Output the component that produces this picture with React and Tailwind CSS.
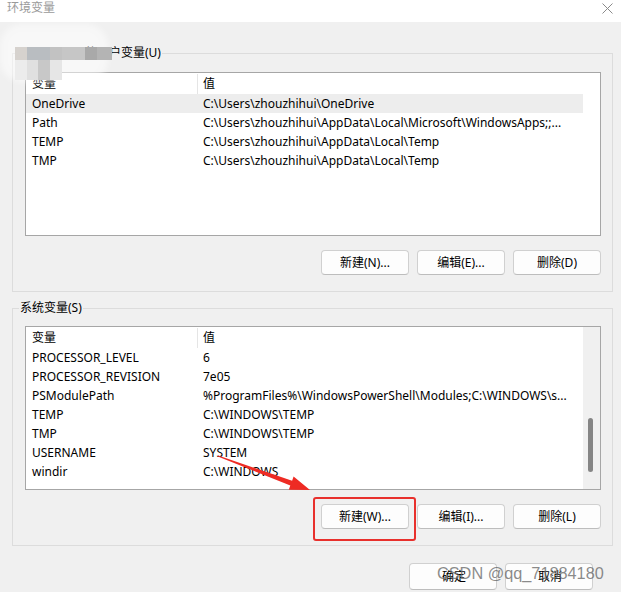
import { useState } from 'react'

const USER_VARS = [
  ['OneDrive', 'C:\\Users\\zhouzhihui\\OneDrive'],
  ['Path', 'C:\\Users\\zhouzhihui\\AppData\\Local\\Microsoft\\WindowsApps;;...'],
  ['TEMP', 'C:\\Users\\zhouzhihui\\AppData\\Local\\Temp'],
  ['TMP', 'C:\\Users\\zhouzhihui\\AppData\\Local\\Temp'],
]

const SYSTEM_VARS = [
  ['PROCESSOR_LEVEL', '6'],
  ['PROCESSOR_REVISION', '7e05'],
  ['PSModulePath', '%ProgramFiles%\\WindowsPowerShell\\Modules;C:\\WINDOWS\\s...'],
  ['TEMP', 'C:\\WINDOWS\\TEMP'],
  ['TMP', 'C:\\WINDOWS\\TEMP'],
  ['USERNAME', 'SYSTEM'],
  ['windir', 'C:\\WINDOWS'],
]

function VarList({ rows, selected, onSelect, scrollbar }) {
  return (
    <div className="h-[164px] border border-[#a6a6a6] bg-white flex overflow-hidden">
      <div className="w-[557px] flex flex-col">
        <div className="h-[21px] flex shrink-0 text-[12px] pt-[1px]">
          <div className="w-[172px] pl-[6px] border-r border-[#e5e5e5] flex items-center">变量</div>
          <div className="pl-[5px] flex items-center">值</div>
        </div>
        {rows.map(([name, value], i) => (
          <div
            key={name + i}
            onClick={() => onSelect(i)}
            className={`h-[19px] shrink-0 flex items-center pt-[1px] text-[12px] whitespace-nowrap ${
              i === selected ? 'bg-[#ededed]' : ''
            }`}
          >
            <div className="w-[172px] pl-[6px]">{name}</div>
            <div className="pl-[5px]">{value}</div>
          </div>
        ))}
      </div>
      {scrollbar ? (
        <div className="w-[17px] bg-[#f0f0f0] pt-[91px] pl-[5px]">
          <div className="w-[5px] h-[54px] rounded-full bg-[#858585]" />
        </div>
      ) : (
        <div className="w-[17px]" />
      )}
    </div>
  )
}

function Btn({ children, className = '' }) {
  return (
    <button
      type="button"
      className={`h-[25px] w-[88px] rounded-[4px] border border-[#d0d0d0] border-b-[#bdbdbd] bg-[#fdfdfd] text-[12px] flex items-center justify-center ${className}`}
    >
      {children}
    </button>
  )
}

function Group({ label, children }) {
  return (
    <fieldset className="w-[601px] ml-[12px] border border-[#dcdcdc] pl-[12px] pr-[11px] pb-[16px]">
      <legend className="ml-[-6px] px-[1px] text-[12px] leading-4">{label}</legend>
      {children}
    </fieldset>
  )
}

export default function App() {
  const [userSel, setUserSel] = useState(0)
  const [sysSel, setSysSel] = useState(-1)

  return (
    <div
      className="relative w-[621px] h-[592px] overflow-hidden bg-[#f0f0f0] text-black"
      style={{ fontFamily: '"Noto Sans", "Noto Sans CJK SC", sans-serif' }}
    >
      {/* title bar */}
      <div className="h-[22px] bg-white flex items-start justify-between pl-[7px] pr-[8px] pt-[1px]">
        <span className="text-[12px] leading-[14px] text-[#9a9a9a]">环境变量</span>
        <svg width="11" height="11" viewBox="0 0 11 11" className="mt-[2px]">
          <path d="M0.5 0.5 L10.5 10.5 M10.5 0.5 L0.5 10.5" stroke="#8a8a8a" strokeWidth="1" fill="none" />
        </svg>
      </div>

      <div className="mt-[23px]">
        <Group label="zhouzhihui 的用户变量(U)">
          <div className="mt-[11px]">
            <VarList rows={USER_VARS} selected={userSel} onSelect={setUserSel} />
          </div>
          <div className="mt-[14px] flex justify-end gap-[8px]">
            <Btn>新建(N)...</Btn>
            <Btn>编辑(E)...</Btn>
            <Btn>删除(D)</Btn>
          </div>
        </Group>
      </div>

      <div className="mt-[8px]">
        <Group label="系统变量(S)">
          <div className="mt-[10px]">
            <VarList rows={SYSTEM_VARS} selected={sysSel} onSelect={setSysSel} scrollbar />
          </div>
          <div className="mt-[14px] flex justify-end gap-[8px]">
            <Btn>新建(W)...</Btn>
            <Btn>编辑(I)...</Btn>
            <Btn>删除(L)</Btn>
          </div>
        </Group>
      </div>

      <div className="mt-[17px] flex justify-end gap-[8px] pr-[28px]">
        <Btn className="w-[87px] h-[27px] pl-[2px]">确定</Btn>
        <Btn className="w-[87px] h-[27px] pl-[2px]">取消</Btn>
      </div>

      {/* mosaic blur over the user name */}
      <div className="absolute left-0 top-[24px] w-[108px] h-[58px] rounded-[22px] bg-white/50 blur-[3px] pointer-events-none" />
      <div className="absolute left-[15px] top-[47px] flex h-[13px] pointer-events-none">
        <div className="w-[12px] bg-[#d6d2ce]" />
        <div className="w-[23px] bg-[#b9bdc1]" />
        <div className="w-[12px] bg-[#c2c2c2]" />
        <div className="w-[23px] bg-[#c6c6c6]" />
        <div className="w-[12px] bg-[#a9a9a9]" />
        <div className="w-[15px] bg-[#b4b4b4]" />
      </div>
      <div className="absolute left-[15px] top-[60px] flex h-[20px] pointer-events-none">
        <div className="w-[12px] bg-[#ececec]" />
        <div className="w-[11px] bg-[#e0e0e0]" />
        <div className="w-[12px] bg-[#c8c8c8]" />
        <div className="w-[12px] bg-[#e6e6e6]" />
      </div>

      {/* red annotation */}
      <div className="absolute left-[313px] top-[497px] w-[103px] h-[44px] border-2 border-[#e8302c] rounded-[3px] pointer-events-none" />
      <svg className="absolute inset-0 pointer-events-none" width="621" height="592">
        <polygon
          points="218.2,455.5 292.1,480.8 293.6,476.5 310,490 288.8,489.7 290.3,485.4 217.8,456.5"
          fill="#ee2b24"
        />
      </svg>

      {/* watermark */}
      <div
        className="absolute left-[437px] top-[564px] text-[16.3px] leading-[18px] text-[rgba(100,100,100,0.75)] whitespace-nowrap pointer-events-none"
        style={{ fontFamily: '"Liberation Sans", sans-serif' }}
      >
        CSDN @qq_71884180
      </div>
    </div>
  )
}
